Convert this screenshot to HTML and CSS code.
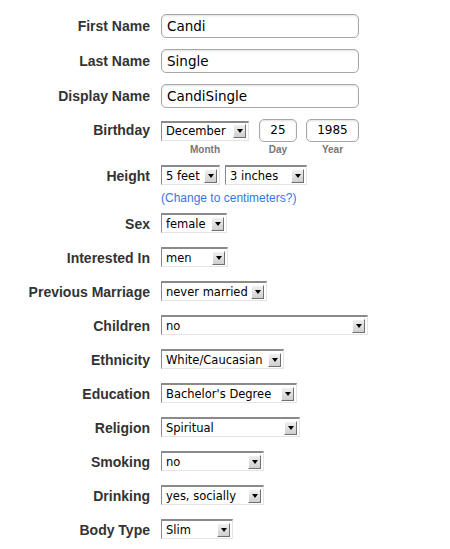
FILE: index.html
```html
<!DOCTYPE html>
<html>
<head>
<meta charset="utf-8">
<link rel="stylesheet" href="styles.css">
</head>
<body>
<div class="form">
  <div class="row text-row">
    <div class="label tall">First Name</div>
    <div class="field"><div class="input">Candi</div></div>
  </div>
  <div class="row text-row">
    <div class="label tall">Last Name</div>
    <div class="field"><div class="input">Single</div></div>
  </div>
  <div class="row text-row">
    <div class="label tall">Display Name</div>
    <div class="field"><div class="input">CandiSingle</div></div>
  </div>
  <div class="row birthday-row">
    <div class="label mid">Birthday</div>
    <div class="field date">
      <div class="part">
        <div class="ctl"><div class="sel w-month"><span class="txt">December</span><span class="arr"></span></div></div>
        <div class="sub">Month</div>
      </div>
      <div class="part">
        <div class="ctl"><div class="small-input w-day">25</div></div>
        <div class="sub">Day</div>
      </div>
      <div class="part">
        <div class="ctl"><div class="small-input w-year">1985</div></div>
        <div class="sub">Year</div>
      </div>
    </div>
  </div>
  <div class="row height-row">
    <div class="label">Height</div>
    <div class="field">
      <div class="pair">
        <div class="sel w-feet"><span class="txt">5 feet</span><span class="arr"></span></div>
        <div class="sel w-inches"><span class="txt">3 inches</span><span class="arr"></span></div>
      </div>
      <a class="link" href="#">(Change to centimeters?)</a>
    </div>
  </div>
  <div class="row">
    <div class="label">Sex</div>
    <div class="field"><div class="sel w-sex"><span class="txt">female</span><span class="arr"></span></div></div>
  </div>
  <div class="row">
    <div class="label">Interested In</div>
    <div class="field"><div class="sel w-int"><span class="txt">men</span><span class="arr"></span></div></div>
  </div>
  <div class="row">
    <div class="label">Previous Marriage</div>
    <div class="field"><div class="sel w-prev"><span class="txt">never married</span><span class="arr"></span></div></div>
  </div>
  <div class="row">
    <div class="label">Children</div>
    <div class="field"><div class="sel w-child"><span class="txt">no</span><span class="arr"></span></div></div>
  </div>
  <div class="row">
    <div class="label">Ethnicity</div>
    <div class="field"><div class="sel w-eth"><span class="txt">White/Caucasian</span><span class="arr"></span></div></div>
  </div>
  <div class="row">
    <div class="label">Education</div>
    <div class="field"><div class="sel w-edu"><span class="txt">Bachelor's Degree</span><span class="arr"></span></div></div>
  </div>
  <div class="row">
    <div class="label">Religion</div>
    <div class="field"><div class="sel w-rel"><span class="txt">Spiritual</span><span class="arr"></span></div></div>
  </div>
  <div class="row">
    <div class="label">Smoking</div>
    <div class="field"><div class="sel w-smoke"><span class="txt">no</span><span class="arr"></span></div></div>
  </div>
  <div class="row">
    <div class="label">Drinking</div>
    <div class="field"><div class="sel w-drink"><span class="txt">yes, socially</span><span class="arr"></span></div></div>
  </div>
  <div class="row">
    <div class="label">Body Type</div>
    <div class="field"><div class="sel w-body"><span class="txt">Slim</span><span class="arr"></span></div></div>
  </div>
</div>
</body>
</html>
```
FILE: styles.css
```css
html, body {
  margin: 0;
  padding: 0;
  background: #fff;
}

.form {
  padding-top: 14px;
  width: 450px;
}

.row {
  display: grid;
  grid-template-columns: 150px 1fr;
  column-gap: 11px;
  margin-bottom: 14px;
}

.label {
  text-align: right;
  font: bold 14px "Liberation Sans", Arial, sans-serif;
  color: #333;
  line-height: 20px;
  height: 20px;
  padding-top: 1px;
  box-sizing: border-box;
  white-space: nowrap;
}

.label.tall { line-height: 24px; height: 24px; padding-top: 0; }
.label.mid { line-height: 23px; height: 23px; padding-top: 0; }

.text-row { margin-bottom: 11px; }

.input {
  box-sizing: border-box;
  width: 198px;
  height: 24px;
  border: 1px solid #a8a8a8;
  border-radius: 5px;
  box-shadow: inset 0 1px 2px rgba(0, 0, 0, 0.12);
  padding-left: 5px;
  font: 13.5px "DejaVu Sans", sans-serif;
  line-height: 23px;
  color: #000;
  background: #fff;
}

.birthday-row { margin-bottom: 9px; }

.date {
  display: flex;
  align-items: flex-start;
}

.part {
  display: flex;
  flex-direction: column;
  align-items: center;
  margin-right: 9px;
}

.part:first-child { margin-right: 10px; }

.ctl {
  height: 23px;
  display: flex;
  align-items: center;
}

.sub {
  font: bold 10px "Liberation Sans", Arial, sans-serif;
  color: #777;
  line-height: 12px;
  margin-top: 2px;
}

.small-input {
  box-sizing: border-box;
  height: 23px;
  border: 1px solid #a8a8a8;
  border-radius: 5px;
  box-shadow: inset 0 1px 2px rgba(0, 0, 0, 0.12);
  text-align: center;
  font: 12px "DejaVu Sans", sans-serif;
  line-height: 21px;
  color: #000;
  background: #fff;
}

.w-day { width: 38px; }
.w-year { width: 53px; }

.sel {
  box-sizing: border-box;
  display: flex;
  align-items: center;
  height: 20px;
  border-style: solid;
  border-width: 2px 1px 1px 1px;
  border-color: #8a8a8a #e4e4e4 #e4e4e4 #8a8a8a;
  padding: 0 2px 0 4px;
  background: #fff;
  font: 11.5px "DejaVu Sans", sans-serif;
  color: #000;
}

.sel .txt {
  flex: 1;
  white-space: nowrap;
  overflow: hidden;
  line-height: 16px;
}

.sel .arr {
  box-sizing: border-box;
  position: relative;
  width: 13px;
  height: 14px;
  flex: none;
  background: linear-gradient(#f0f0f0, #cfcfcf);
  border-style: solid;
  border-width: 1px;
  border-color: #ffffff #707070 #707070 #ffffff;
}

.sel .arr::after {
  content: "";
  position: absolute;
  left: 3px;
  top: 4px;
  border-left: 3px solid transparent;
  border-right: 3px solid transparent;
  border-top: 4px solid #000;
}

.w-month { width: 88px; }
.w-feet { width: 59px; }
.w-inches { width: 82px; }
.w-sex { width: 66px; }
.w-int { width: 67px; }
.w-prev { width: 106px; }
.w-child { width: 207px; }
.w-eth { width: 123px; }
.w-edu { width: 136px; }
.w-rel { width: 139px; }
.w-smoke { width: 103px; }
.w-drink { width: 103px; }
.w-body { width: 72px; }

.height-row { margin-bottom: 8px; }

.pair {
  display: flex;
  gap: 5px;
}

.link {
  display: block;
  margin-top: 6px;
  font: 12px "Liberation Sans", Arial, sans-serif;
  line-height: 14px;
  color: #3a74e6;
  text-decoration: none;
}
```
